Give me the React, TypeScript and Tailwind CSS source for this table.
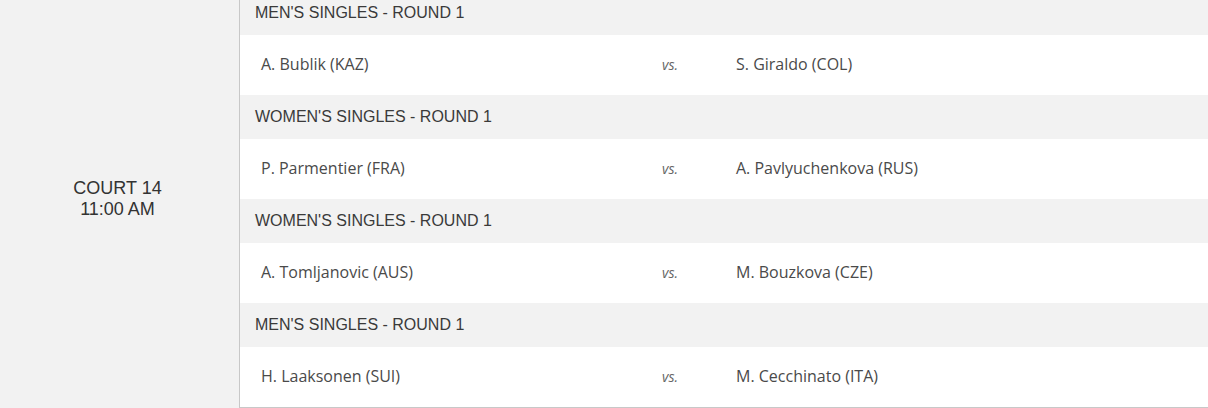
const matches = [
  { round: "MEN'S SINGLES - ROUND 1", home: "A. Bublik (KAZ)", away: "S. Giraldo (COL)" },
  { round: "WOMEN'S SINGLES - ROUND 1", home: "P. Parmentier (FRA)", away: "A. Pavlyuchenkova (RUS)" },
  { round: "WOMEN'S SINGLES - ROUND 1", home: "A. Tomljanovic (AUS)", away: "M. Bouzkova (CZE)" },
  { round: "MEN'S SINGLES - ROUND 1", home: "H. Laaksonen (SUI)", away: "M. Cecchinato (ITA)" },
];

export default function App() {
  return (
    <div className="h-[408px] w-[1208px] overflow-hidden bg-white">
      <div className="-mt-[9px] flex">
        {/* Court / time column */}
        <div className="flex w-[239px] shrink-0 items-center justify-center bg-[#f2f2f2] pb-[2px]">
          <div className="pr-[4px] text-center font-['Liberation_Sans',Arial,sans-serif] text-[18px] leading-[21px] text-[#333]">
            <div>COURT 14</div>
            <div>11:00 AM</div>
          </div>
        </div>

        {/* Matches */}
        <div className="flex-1 border-b border-l border-[#c8c8c8]">
          {matches.map((m, i) => (
            <div key={i}>
              <div className="flex h-[44px] items-center bg-[#f2f2f2] pl-[15px] font-['Liberation_Sans',Arial,sans-serif] text-[16px] text-[#3a3a3a]">
                {m.round}
              </div>
              <div className="flex h-[60px] items-center bg-white pb-[3px] font-['Open_Sans',sans-serif] text-[16px] text-[#4a4a4a]">
                <div className="w-[422px] pl-[21px]">{m.home}</div>
                <div className="w-[74px] pt-[2px] text-[14px] italic text-[#666]">vs.</div>
                <div>{m.away}</div>
              </div>
            </div>
          ))}
        </div>
      </div>
    </div>
  );
}
